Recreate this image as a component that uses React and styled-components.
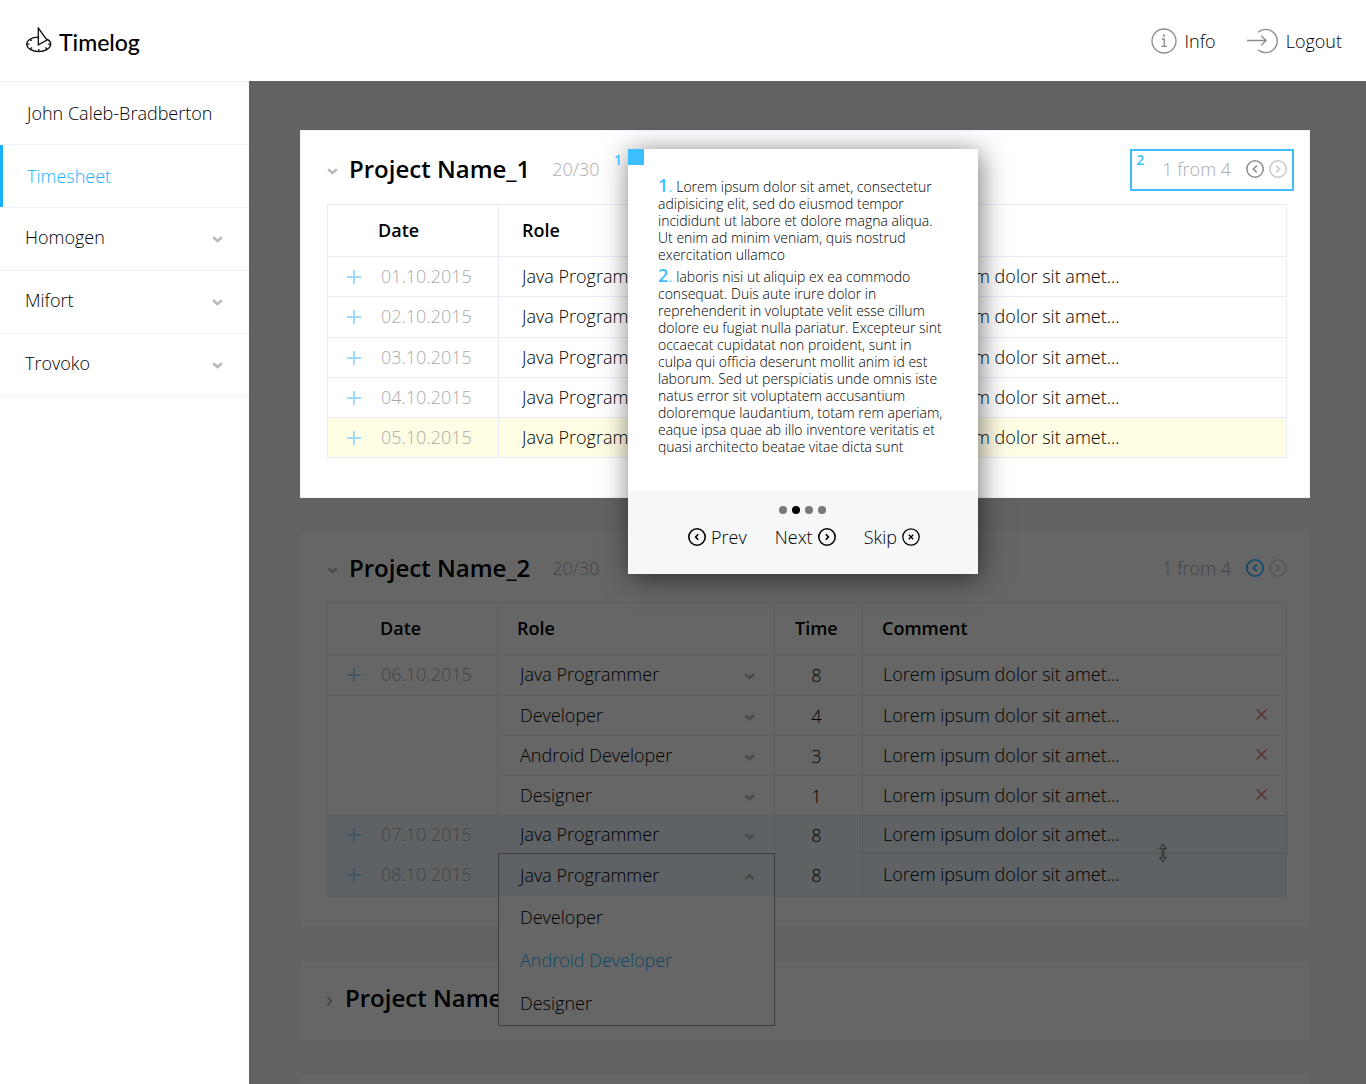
import React from "react";
import styled, { createGlobalStyle } from "styled-components";

const BLUE = "#1ab2ff";
const LINE = "#e9ecf8";

const GlobalStyle = createGlobalStyle`
  *, *::before, *::after { box-sizing: border-box; }
  body {
    margin: 0;
    background: #fff;
    color: #000;
    font-family: "Open Sans", "Noto Sans", sans-serif;
    font-size: 18px;
    font-weight: 300;
    line-height: 24px;
  }
  button, select { font: inherit; color: inherit; }
  button { padding: 0; border: 0; background: none; cursor: pointer; }
  a { color: inherit; text-decoration: none; }
  h1, h2, p, ul, ol { margin: 0; padding: 0; }
  ul, ol { list-style: none; }
  svg { display: block; flex: none; }
`;

const Page = styled.div`
  display: flex;
  flex-direction: column;
  height: 100vh;
`;

const TopBar = styled.header`
  display: flex;
  align-items: center;
  justify-content: space-between;
  height: 81px;
  flex: none;
  padding: 0 24px 0 26px;
`;

const Brand = styled.a`
  display: flex;
  align-items: center;
  gap: 6px;
  font-family: Lato, "Open Sans", sans-serif;
  font-size: 23px;
  font-weight: 500;
  padding-top: 2px;
  svg { margin-bottom: 4px; }
`;

const TopActions = styled.div`
  display: flex;
  gap: 31px;
`;

const TopAction = styled.button`
  display: flex;
  align-items: center;
  gap: ${(p) => p.$gap}px;
`;

const Body = styled.div`
  display: flex;
  flex: 1;
  min-height: 0;
`;

const Sidebar = styled.nav`
  width: 249px;
  flex: none;
  background: #fff;
`;

const SideRow = styled.li`
  height: 63px;
  border-top: 1px solid #f0f2f7;
  &:last-child { height: 64px; border-bottom: 1px solid #f0f2f7; }
`;

const SideLink = styled.a`
  display: flex;
  align-items: center;
  height: 100%;
  padding: 0 27px 1px 24px;
  border-left: 3px solid ${(p) => (p.$active ? BLUE : "transparent")};
  color: ${(p) => (p.$active ? BLUE : "inherit")};
`;

const SideToggle = styled.button`
  display: flex;
  align-items: center;
  justify-content: space-between;
  width: 100%;
  height: 100%;
  padding: 0 26px 4px 25px;
  svg { margin-top: 4px; }
`;

const Main = styled.main`
  position: relative;
  flex: 1;
  min-width: 0;
  padding: 49px 56px 0 51px;
  overflow: hidden;
  display: flex;
  flex-direction: column;
  gap: 32px;
  background: #f6f7fb;
`;

const Backdrop = styled.div`
  position: absolute;
  inset: 0;
  z-index: 2;
  background: rgba(0, 0, 0, 0.6);
`;

const Card = styled.section`
  position: relative;
  z-index: ${(p) => (p.$raised ? 3 : "auto")};
  flex: none;
  padding-bottom: ${(p) => p.$bottom || 0}px;
  border: 1px solid #f0f2f8;
  background: #fff;
`;

const CardHead = styled.div`
  display: flex;
  align-items: center;
  height: ${(p) => p.$height}px;
  padding: ${(p) => (p.$closed ? "0 15px 4px 25px" : "4px 15px 0 26px")};
`;

const CardToggle = styled.button`
  display: flex;
  align-items: center;
  gap: ${(p) => p.$gap}px;
  padding-bottom: 2px;
  font-size: 24px;
  line-height: 32px;
  font-weight: 600;
  svg { margin-top: 6px; }
`;

const Title = styled.h2`
  font: inherit;
`;

const Count = styled.span`
  margin-left: 22px;
  padding-bottom: 2px;
  color: #aaa;
`;

const Pager = styled.div`
  position: relative;
  display: flex;
  align-items: center;
  height: 42px;
  margin-left: auto;
  padding: 0 5px 2px 30px;
  border: 2px solid ${(p) => (p.$marked ? "#3dbfff" : "transparent")};
  color: #aaa;
`;

const PagerButtons = styled.div`
  display: flex;
  gap: 5px;
  margin-left: 15px;
`;

const PagerButton = styled.button`
  color: ${(p) => p.$tone};
  &:disabled { cursor: default; }
`;

const StepTag = styled.span`
  position: absolute;
  top: ${(p) => p.$top}px;
  left: ${(p) => p.$left}px;
  color: #3dbfff;
  font-size: 14px;
  line-height: 18px;
  font-weight: 600;
`;

const TableWrap = styled.div`
  padding: 0 22px 0 26px;
`;

const Table = styled.table`
  width: 100%;
  table-layout: fixed;
  border-collapse: separate;
  border-spacing: 0;
  border-top: 1px solid ${LINE};
  border-left: 1px solid ${LINE};
`;

const Th = styled.th`
  height: 52px;
  padding: 0 0 2px ${(p) => p.$left}px;
  border-right: ${(p) => (p.$open ? 0 : 1)}px solid ${LINE};
  border-bottom: 1px solid ${LINE};
  font-weight: 600;
  text-align: left;
`;

const rowTone = { warn: "#fffde3", info: "#ebf5fc" };

const Row = styled.tr`
  height: ${(p) => p.$height}px;
  background: ${(p) => rowTone[p.$tone] || "transparent"};
`;

const Td = styled.td`
  position: relative;
  height: inherit;
  padding: 0 0 2px;
  border-right: 1px solid ${LINE};
  border-bottom: 1px solid ${(p) => (p.$tone === "info" ? "#e2edf8" : LINE)};
`;

const TimeTd = styled(Td)`
  padding: 0 4px 0 0;
  text-align: center;
`;

const FocusedTd = styled(Td)`
  &::after {
    content: "";
    position: absolute;
    inset: -1px;
    border: 1px solid #cfd6da;
    pointer-events: none;
  }
`;

const DateCell = styled.div`
  display: flex;
  align-items: center;
  gap: 20px;
  padding-left: 19px;
  color: #aaa;
`;

const AddButton = styled.button`
  color: #a3d9fb;
  padding-top: 2px;
`;

const RoleField = styled.div`
  position: relative;
  display: flex;
  align-items: center;
  svg { position: absolute; right: 19px; top: 11px; pointer-events: none; }
`;

const RoleSelect = styled.select`
  width: 100%;
  height: 24px;
  padding: 0 40px 0 ${(p) => p.$left}px;
  border: 0;
  outline: 0;
  background: transparent;
  appearance: none;
`;

const ComboButton = styled.button`
  position: absolute;
  inset: -1px;
  display: flex;
  align-items: center;
  justify-content: space-between;
  padding: 0 19px 0 21px;
  border: 1px solid #999;
  svg { margin-top: 4px; }
`;

const ComboList = styled.ul`
  position: absolute;
  z-index: 1;
  top: 100%;
  left: -1px;
  right: -1px;
  border: 1px solid #999;
  border-top: 0;
  background: #fff;
`;

const ComboOption = styled.li`
  height: 43px;
  padding: 9px 21px;
  color: ${(p) => (p.$active ? BLUE : "inherit")};
`;

const Comment = styled.div`
  display: flex;
  align-items: center;
  justify-content: space-between;
  padding: 0 19px 0 20px;
`;

const DeleteButton = styled.button`
  color: #e08a84;
`;

const Grip = styled.span`
  position: absolute;
  right: 118px;
  bottom: -10px;
  z-index: 1;
`;

const Tour = styled.div`
  position: absolute;
  top: 18px;
  left: 327px;
  width: 350px;
  background: #fff;
  box-shadow: 2px 4px 26px rgba(0, 0, 0, 0.55);
`;

const TourCorner = styled.span`
  position: absolute;
  top: 0;
  left: 0;
  width: 16px;
  height: 16px;
  background: #3dbfff;
`;

const TourText = styled.ol`
  height: 342px;
  padding: 28px 30px 0;
  font-size: 14px;
  line-height: 17px;
`;

const TourItem = styled.li`
  margin-bottom: 4px;
`;

const TourNumber = styled.span`
  color: #3dbfff;
  font-size: 18px;
  line-height: 17px;
  b { font-weight: 600; }
`;

const TourFoot = styled.div`
  display: flex;
  flex-direction: column;
  align-items: center;
  gap: 11px;
  height: 83px;
  padding-top: 15px;
  background: #f5f7f9;
`;

const Dots = styled.div`
  display: flex;
  gap: 5px;
  margin-right: 2px;
`;

const Dot = styled.span`
  width: 8px;
  height: 8px;
  border-radius: 50%;
  background: ${(p) => (p.$active ? "#000" : "#77797b")};
`;

const TourNav = styled.div`
  display: flex;
  gap: 28px;
  padding-left: 2px;
`;

const TourButton = styled.button`
  display: flex;
  align-items: center;
  gap: 5px;
`;

const chevronPaths = {
  down: "M1.2 1.2 5.5 5 9.8 1.2",
  up: "M1.2 5 5.5 1.2 9.8 5",
};

const Chevron = ({ dir = "down" }) =>
  dir === "right" ? (
    <svg width="7" height="12" viewBox="0 0 7 12" fill="none" stroke="#b9b9b9" strokeWidth="2.2">
      <path d="M1.2 1.4 5.2 6 1.2 10.6" />
    </svg>
  ) : (
    <svg width="11" height="7" viewBox="0 0 11 7" fill="none" stroke="#b9b9b9" strokeWidth="2.6">
      <path d={chevronPaths[dir]} />
    </svg>
  );

const PlusIcon = () => (
  <svg width="14" height="14" viewBox="0 0 14 14" fill="none" stroke="currentColor" strokeWidth="2">
    <path d="M7 0v14M0 7h14" />
  </svg>
);

const CrossIcon = () => (
  <svg width="11" height="11" viewBox="0 0 11 11" fill="none" stroke="currentColor" strokeWidth="1.7">
    <path d="M.7.7l9.600 9.600M10.300.7l-9.600 9.600" />
  </svg>
);

const circleMarks = {
  prev: "M10.8 5.6 7.4 9l3.4 3.4",
  next: "M7.2 5.6 10.6 9l-3.4 3.4",
  prevSmall: "M10.2 6.2 7.6 9l2.6 2.8",
  nextSmall: "M7.8 6.2 10.4 9l-2.6 2.8",
  close: "M6.8 6.8l4.4 4.4M11.2 6.8l-4.4 4.4",
};

const CircleIcon = ({ mark, stroke = 1.6 }) => (
  <svg width="18" height="18" viewBox="0 0 18 18" fill="none" stroke="currentColor" strokeWidth={stroke}>
    <circle cx="9" cy="9" r="8.2" />
    <path d={circleMarks[mark]} />
  </svg>
);

const LogoIcon = () => (
  <svg width="27" height="26" viewBox="0 0 27 26" fill="none" stroke="#111" strokeWidth="1.3">
    <path d="M12.300 10.100C5.600 10.200.7 13.300.7 17.100c0 4.200 5.400 7.500 12 7.500s12-3.300 12-7.500c0-1.900-1.300-3.700-3.500-5" />
    <path d="M12.300 1v16.800l8.700-4.700L12.300 1z" />
    <path d="M.8 17.100h2.600M22.100 17.100h2.600M12.700 22v2.600M4.200 12.600l1.600 1M4.600 21.800l1.600-1.200M20.900 21.800l-1.600-1.200" />
  </svg>
);

const InfoIcon = () => (
  <svg width="26" height="26" viewBox="0 0 26 26" fill="none" stroke="#8c8c8c" strokeWidth="1.3">
    <circle cx="13" cy="13" r="12" />
    <path d="M10.800 11h2.400v7.300M10.300 18.400h5.800" />
    <rect x="12" y="6.600" width="2" height="2" fill="#8c8c8c" stroke="none" />
  </svg>
);

const LogoutIcon = () => (
  <svg width="32" height="26" viewBox="0 0 32 26" fill="none" stroke="#8c8c8c" strokeWidth="1.3">
    <path d="M11 4.300A11.600 11.600 0 1 1 11 21.700" />
    <path d="M0 12.500h19M14.300 7.800 19 12.500l-4.700 4.700" />
  </svg>
);

const GripIcon = () => (
  <svg width="10" height="20" viewBox="0 0 10 20" fill="#d8dde0" stroke="#555" strokeOpacity=".8" strokeWidth="1">
    <path d="M5 1 8.500 5.500H6v9h2.500L5 19 1.500 14.500H4v-9H1.500z" />
  </svg>
);

const ROLES = ["Java Programmer", "Developer", "Android Developer", "Designer"];
const LOREM = "Lorem ipsum dolor sit amet...";

const firstRows = [
  { date: "01.10.2015", height: 40 },
  { date: "02.10.2015", height: 41 },
  { date: "03.10.2015", height: 40 },
  { date: "04.10.2015", height: 40 },
  { date: "05.10.2015", height: 40, tone: "warn" },
].map((r) => ({ ...r, role: ROLES[0] }));

const secondRows = [
  { date: "06.10.2015", height: 41, role: ROLES[0], time: 8 },
  { blank: 3, height: 40, role: ROLES[1], time: 4, removable: true },
  { height: 40, role: ROLES[2], time: 3, removable: true },
  { height: 40, role: ROLES[3], time: 1, removable: true },
  { date: "07.10.2015", height: 38, role: ROLES[0], time: 8, tone: "info", focused: true },
  { date: "08.10.2015", height: 43, role: ROLES[0], time: 8, tone: "info", open: true },
];

const firstHeads = [
  { text: "Date", left: 50 },
  { text: "Role", left: 23 },
  { left: 20 },
  { left: 19 },
];

const secondHeads = [
  { text: "Date", left: 52 },
  { text: "Role", left: 18 },
  { text: "Time", left: 20 },
  { text: "Comment", left: 19 },
];

function RolePicker({ row, left }) {
  if (row.open) {
    return (
      <>
        <ComboButton type="button" aria-haspopup="listbox" aria-expanded="true" aria-label="Role">
          {row.role}
          <Chevron dir="up" />
        </ComboButton>
        <ComboList role="listbox" aria-label="Roles">
          {ROLES.slice(1).map((role) => (
            <ComboOption key={role} role="option" $active={role === ROLES[2]} aria-selected={role === ROLES[2]}>
              {role}
            </ComboOption>
          ))}
        </ComboList>
      </>
    );
  }
  return (
    <RoleField>
      <RoleSelect $left={left} defaultValue={row.role} aria-label="Role">
        {ROLES.map((role) => (
          <option key={role}>{role}</option>
        ))}
      </RoleSelect>
      <Chevron />
    </RoleField>
  );
}

function Timesheet({ heads, rows, roleInset }) {
  return (
    <TableWrap>
      <Table>
        <colgroup>
          <col width="171" />
          <col width="276" />
          <col width="88" />
          <col />
        </colgroup>
        <thead>
          <tr>
            {heads.map((head, i) => (
              <Th key={i} $left={head.left}>{head.text}</Th>
            ))}
          </tr>
        </thead>
        <tbody>
          {rows.map((row, i) => {
            const CommentTd = row.focused ? FocusedTd : Td;
            return (
              <Row key={i} $height={row.height} $tone={row.tone}>
                {row.date && (
                  <Td $tone={row.tone}>
                    <DateCell>
                      <AddButton type="button" aria-label="Add entry">
                        <PlusIcon />
                      </AddButton>
                      {row.date}
                    </DateCell>
                  </Td>
                )}
                {row.blank && <Td rowSpan={row.blank} />}
                <Td $tone={row.tone}>
                  <RolePicker row={row} left={roleInset} />
                </Td>
                <TimeTd $tone={row.tone}>{row.time}</TimeTd>
                <CommentTd $tone={row.tone}>
                  <Comment>
                    {LOREM}
                    {row.removable && (
                      <DeleteButton type="button" aria-label="Delete entry">
                        <CrossIcon />
                      </DeleteButton>
                    )}
                  </Comment>
                  {row.focused && (
                    <Grip>
                      <GripIcon />
                    </Grip>
                  )}
                </CommentTd>
              </Row>
            );
          })}
        </tbody>
      </Table>
    </TableWrap>
  );
}

function ProjectHead({ name, height, marked, prevTone, nextTone }) {
  return (
    <CardHead $height={height}>
      <CardToggle type="button" aria-expanded="true" $gap={11}>
        <Chevron />
        <Title>{name}</Title>
      </CardToggle>
      <Count>20/30</Count>
      <Pager $marked={marked}>
        {marked && <StepTag $top={0} $left={4}>2</StepTag>}
        1 from 4
        <PagerButtons>
          <PagerButton type="button" aria-label="Previous page" $tone={prevTone}>
            <CircleIcon mark="prev" />
          </PagerButton>
          <PagerButton type="button" aria-label="Next page" disabled $tone={nextTone}>
            <CircleIcon mark="next" />
          </PagerButton>
        </PagerButtons>
      </Pager>
    </CardHead>
  );
}

function TourDialog() {
  return (
    <Tour role="dialog" aria-label="Tour">
      <StepTag $top={2} $left={-14}>1</StepTag>
      <TourCorner />
      <TourText>
        <TourItem>
          <TourNumber><b>1</b>.</TourNumber> Lorem ipsum dolor sit amet, consectetur adipisicing elit, sed do
          eiusmod tempor incididunt ut labore et dolore magna aliqua. Ut enim ad minim veniam, quis
          nostrud exercitation ullamco
        </TourItem>
        <TourItem>
          <TourNumber><b>2</b>.</TourNumber> laboris nisi ut aliquip ex ea commodo consequat. Duis aute irure
          dolor in reprehenderit in voluptate velit esse cillum dolore eu fugiat nulla pariatur.
          Excepteur sint occaecat cupidatat non proident, sunt in culpa qui officia deserunt mollit
          anim id est laborum. Sed ut perspiciatis unde omnis iste natus error sit voluptatem
          accusantium doloremque laudantium, totam rem aperiam, eaque ipsa quae ab illo inventore
          veritatis et quasi architecto beatae vitae dicta sunt
        </TourItem>
      </TourText>
      <TourFoot>
        <Dots>
          {[0, 1, 2, 3].map((n) => (
            <Dot key={n} $active={n === 1} />
          ))}
        </Dots>
        <TourNav>
          <TourButton type="button">
            <CircleIcon mark="prevSmall" />
            Prev
          </TourButton>
          <TourButton type="button">
            Next
            <CircleIcon mark="nextSmall" />
          </TourButton>
          <TourButton type="button">
            Skip
            <CircleIcon mark="close" stroke={1.3} />
          </TourButton>
        </TourNav>
      </TourFoot>
    </Tour>
  );
}

export default function App() {
  return (
    <Page>
      <GlobalStyle />
      <TopBar>
        <Brand href="#home">
          <LogoIcon />
          Timelog
        </Brand>
        <TopActions>
          <TopAction type="button" $gap={8}>
            <InfoIcon />
            Info
          </TopAction>
          <TopAction type="button" $gap={7}>
            <LogoutIcon />
            Logout
          </TopAction>
        </TopActions>
      </TopBar>
      <Body>
        <Sidebar>
          <ul>
            <SideRow>
              <SideLink href="#profile">John Caleb-Bradberton</SideLink>
            </SideRow>
            <SideRow>
              <SideLink href="#timesheet" $active aria-current="page">Timesheet</SideLink>
            </SideRow>
            {["Homogen", "Mifort", "Trovoko"].map((name) => (
              <SideRow key={name}>
                <SideToggle type="button" aria-expanded="false">
                  {name}
                  <Chevron />
                </SideToggle>
              </SideRow>
            ))}
          </ul>
        </Sidebar>
        <Main>
          <Card $raised $bottom={39}>
            <ProjectHead name="Project Name_1" height={73} marked prevTone="#8f8f8f" nextTone="#c9c9c9" />
            <Timesheet heads={firstHeads} rows={firstRows} roleInset={23} />
            <TourDialog />
          </Card>
          <Card $bottom={30}>
            <ProjectHead name="Project Name_2" height={71} prevTone={BLUE} nextTone="#d6d6d6" />
            <Timesheet heads={secondHeads} rows={secondRows} roleInset={21} />
          </Card>
          <Card>
            <CardHead $height={79} $closed>
              <CardToggle type="button" aria-expanded="false" $gap={12}>
                <Chevron dir="right" />
                <Title>Project Name_3</Title>
              </CardToggle>
            </CardHead>
          </Card>
          <Card>
            <CardHead $height={79} $closed />
          </Card>
          <Backdrop />
        </Main>
      </Body>
    </Page>
  );
}
